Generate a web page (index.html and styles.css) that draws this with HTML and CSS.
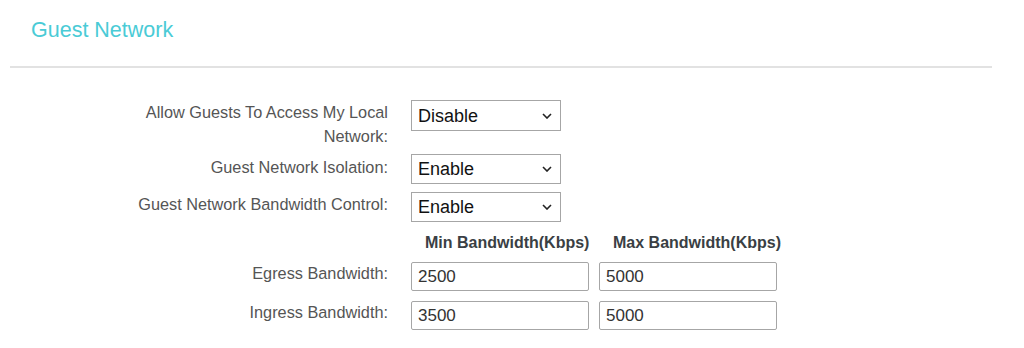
FILE: index.html
```html
<!DOCTYPE html>
<html lang="en">
<head>
    <meta charset="UTF-8">
    <title>Guest Network</title>
    <link rel="stylesheet" href="styles.css">
</head>
<body>

<div class="panel">
    <h2 class="title">Guest Network</h2>
    <div class="divider"></div>

    <form class="settings">
        <div class="row row-access">
            <label class="label" for="access">Allow Guests To Access My Local Network:</label>
            <div class="select-wrap">
                <select id="access">
                    <option>Disable</option>
                    <option>Enable</option>
                </select>
                <svg class="chevron" width="10" height="6" viewBox="0 0 10 6"><path d="M1 1l4 4 4-4" fill="none" stroke="#222" stroke-width="1.6"/></svg>
            </div>
        </div>
        <div class="row row-isolation">
            <label class="label" for="isolation">Guest Network Isolation:</label>
            <div class="select-wrap">
                <select id="isolation">
                    <option>Enable</option>
                    <option>Disable</option>
                </select>
                <svg class="chevron" width="10" height="6" viewBox="0 0 10 6"><path d="M1 1l4 4 4-4" fill="none" stroke="#222" stroke-width="1.6"/></svg>
            </div>
        </div>
        <div class="row row-control">
            <label class="label" for="control">Guest Network Bandwidth Control:</label>
            <div class="select-wrap">
                <select id="control">
                    <option>Enable</option>
                    <option>Disable</option>
                </select>
                <svg class="chevron" width="10" height="6" viewBox="0 0 10 6"><path d="M1 1l4 4 4-4" fill="none" stroke="#222" stroke-width="1.6"/></svg>
            </div>
        </div>
        <div class="row row-head">
            <div class="label"></div>
            <div class="col-head">Min Bandwidth(Kbps)</div>
            <div class="col-head">Max Bandwidth(Kbps)</div>
        </div>
        <div class="row row-egress">
            <label class="label" for="egressMin">Egress Bandwidth:</label>
            <input type="text" id="egressMin" value="2500">
            <input type="text" id="egressMax" value="5000">
        </div>
        <div class="row row-ingress">
            <label class="label" for="ingressMin">Ingress Bandwidth:</label>
            <input type="text" id="ingressMin" value="3500">
            <input type="text" id="ingressMax" value="5000">
        </div>
    </form>
</div>

</body>
</html>
```

FILE: styles.css
```css
body {
    margin: 0;
    background-color: white;
    font-family: "Liberation Sans", Arial, sans-serif;
}
.panel {
    padding: 0 32px 0 10px;
}
.title {
    margin: 0;
    padding: 17px 0 0 21px;
    height: 52px;
    box-sizing: border-box;
    font-size: 21.5px;
    font-weight: normal;
    line-height: 26px;
    color: #4acbd6;
}
.divider {
    height: 2px;
    background-color: #e2e2e2;
    margin-top: 14px;
}
.settings {
    padding-top: 32px;
}
.row {
    display: flex;
    align-items: flex-start;
    gap: 10px;
}
.label {
    width: 250px;
    margin-left: 128px;
    margin-right: 13px;
    text-align: right;
    font-size: 16.3px;
    line-height: 24px;
    color: #555;
}
.select-wrap {
    position: relative;
    width: 150px;
}
.select-wrap select {
    appearance: none;
    width: 150px;
    height: 30px;
    padding: 0 0 0 6px;
    border: 1px solid #a6a6a6;
    border-radius: 0;
    background-color: white;
    font-family: "Liberation Sans", Arial, sans-serif;
    font-size: 18px;
    color: #111;
}
.chevron {
    position: absolute;
    right: 9px;
    top: 12px;
    pointer-events: none;
}
.row-access select {
    height: 31px;
}
.row-access .chevron {
    top: 13px;
}
.row-isolation {
    margin-top: 6px;
}
.row-isolation .label {
    margin-top: 1px;
}
.row-control {
    margin-top: 4px;
}
.row-control .label {
    margin-top: 4px;
}
.row-control .select-wrap {
    margin-top: 4px;
}
.row-head {
    margin-top: 9px;
}
.col-head {
    width: 164px;
    padding-left: 14px;
    white-space: nowrap;
    font-size: 16px;
    font-weight: bold;
    line-height: 24px;
    color: #3a3f44;
}
.row-egress {
    margin-top: 6px;
}
.row-ingress {
    margin-top: 9px;
}
.row input {
    width: 178px;
    height: 29px;
    box-sizing: border-box;
    margin-top: 1px;
    padding: 0 6px;
    border: 1px solid #a6a6a6;
    border-radius: 2px;
    font-family: "Liberation Sans", Arial, sans-serif;
    font-size: 17px;
    color: #333;
}
```
